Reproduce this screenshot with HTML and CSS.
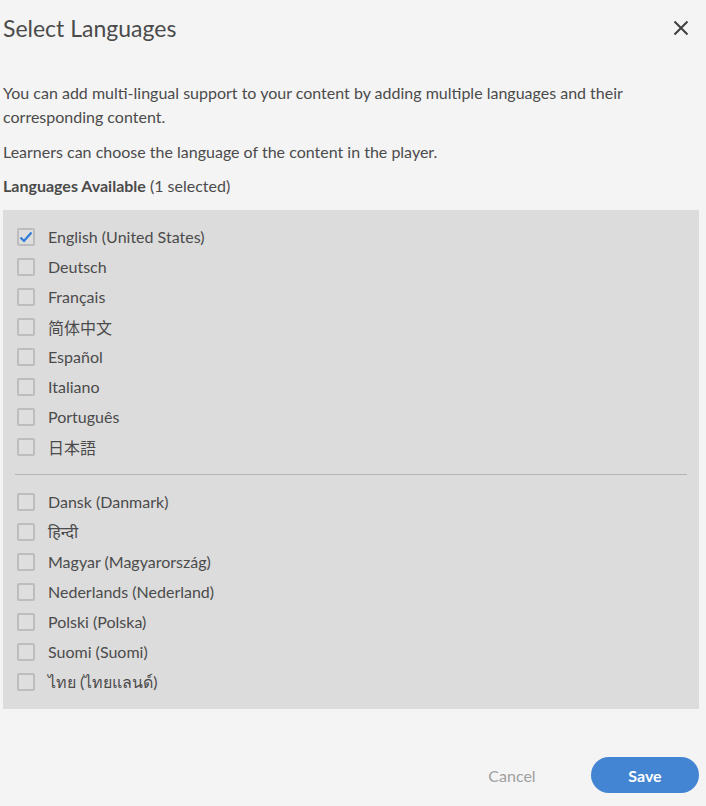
FILE: index.html
```html
<!DOCTYPE html>
<html lang="en">
<head>
<meta charset="utf-8">
<title>Select Languages</title>
<link rel="stylesheet" href="styles.css">
</head>
<body>
<div class="dialog">
  <header class="header">
    <h1 class="title">Select Languages</h1>
    <button class="close" aria-label="Close">
      <svg width="16" height="16" viewBox="0 0 16 16"><path d="M1.5 1.5 L14.5 14.5 M14.5 1.5 L1.5 14.5" stroke="#3e3e3e" stroke-width="2" fill="none"/></svg>
    </button>
  </header>
  <p class="desc">You can add multi-lingual support to your content by adding multiple languages and their corresponding content.</p>
  <p class="desc">Learners can choose the language of the content in the player.</p>
  <p class="label"><strong>Languages Available</strong> (1 selected)</p>
  <div class="panel">
    <ul class="list">
      <li class="row"><span class="box checked"><svg width="14" height="12" viewBox="0 0 14 12"><path d="M1.5 6.5 L5 10 L12.5 1.5" stroke="#2f7bd9" stroke-width="2.2" fill="none"/></svg></span><span class="name">English (United States)</span></li>
      <li class="row"><span class="box"></span><span class="name">Deutsch</span></li>
      <li class="row"><span class="box"></span><span class="name">Français</span></li>
      <li class="row"><span class="box"></span><span class="name cjk">简体中文</span></li>
      <li class="row"><span class="box"></span><span class="name">Español</span></li>
      <li class="row"><span class="box"></span><span class="name">Italiano</span></li>
      <li class="row"><span class="box"></span><span class="name">Português</span></li>
      <li class="row"><span class="box"></span><span class="name cjk-jp">日本語</span></li>
    </ul>
    <hr class="divider">
    <ul class="list">
      <li class="row"><span class="box"></span><span class="name">Dansk (Danmark)</span></li>
      <li class="row"><span class="box"></span><span class="name">हिन्दी</span></li>
      <li class="row"><span class="box"></span><span class="name">Magyar (Magyarország)</span></li>
      <li class="row"><span class="box"></span><span class="name">Nederlands (Nederland)</span></li>
      <li class="row"><span class="box"></span><span class="name">Polski (Polska)</span></li>
      <li class="row"><span class="box"></span><span class="name">Suomi (Suomi)</span></li>
      <li class="row"><span class="box"></span><span class="name">ไทย (ไทยแลนด์)</span></li>
    </ul>
  </div>
  <footer class="footer">
    <button class="btn cancel">Cancel</button>
    <button class="btn save">Save</button>
  </footer>
</div>
</body>
</html>
```
FILE: styles.css
```css
html, body {
  margin: 0;
  padding: 0;
  background: #f4f4f4;
}
body {
  font-family: "Lato", "Noto Sans", "Noto Sans CJK SC", sans-serif;
  color: #4b4b4b;
  font-size: 16px;
}
.dialog {
  padding: 0 7px 0 3px;
}
.header {
  display: flex;
  justify-content: space-between;
  align-items: center;
  height: 56px;
}
.title {
  margin: 0;
  font-size: 23px;
  font-weight: 400;
  color: #4b4b4b;
}
.close {
  border: 0;
  background: transparent;
  padding: 0;
  width: 16px;
  height: 16px;
  margin-right: 10px;
  display: flex;
}
.desc {
  margin: 25px 0 0;
  line-height: 24px;
}
.desc + .desc {
  margin-top: 11px;
}
.label {
  margin: 10px 0 0;
  line-height: 24px;
}
.label strong {
  font-weight: 700;
}
.panel {
  margin-top: 12px;
  background: #dcdcdc;
  padding: 12px 12px;
}
.list {
  list-style: none;
  margin: 0;
  padding: 0;
}
.row {
  display: flex;
  align-items: center;
  height: 30px;
}
.box {
  box-sizing: border-box;
  width: 18px;
  height: 18px;
  margin-left: 2px;
  margin-right: 13px;
  border: 2px solid #bdbdbd;
  border-radius: 2px;
  background: #dedede;
  display: flex;
  align-items: center;
  justify-content: center;
}
.name {
  line-height: 30px;
}
.cjk {
  font-family: "Noto Sans CJK SC", sans-serif;
}
.cjk-jp {
  font-family: "Noto Sans CJK JP", sans-serif;
}
.divider {
  border: 0;
  border-top: 1px solid #b4b4b4;
  margin: 12px 0;
  height: 0;
}
.footer {
  display: flex;
  justify-content: flex-end;
  gap: 25px;
  margin-top: 48px;
}
.btn {
  width: 108px;
  height: 36px;
  border: 0;
  border-radius: 18px;
  font-family: inherit;
  font-size: 16px;
}
.cancel {
  background: transparent;
  color: #a0a0a0;
}
.save {
  background: #4384d3;
  color: #ffffff;
  font-weight: 700;
}
```
